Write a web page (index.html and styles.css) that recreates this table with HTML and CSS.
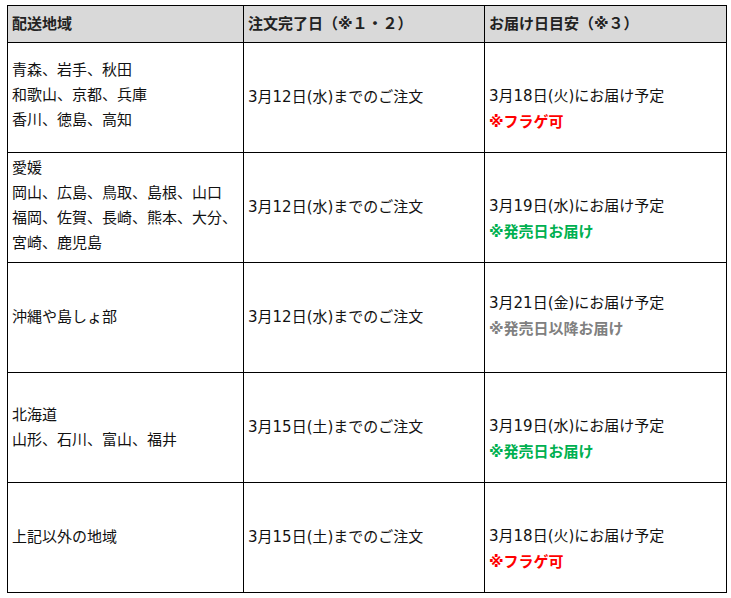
FILE: index.html
```html
<!DOCTYPE html>
<html lang="ja">
<head>
<meta charset="utf-8">
<title>配送スケジュール</title>
<link rel="stylesheet" href="styles.css">
</head>
<body>
<div class="wrap">
<table class="ship">
  <colgroup>
    <col class="c1"><col class="c2"><col class="c3">
  </colgroup>
  <thead>
    <tr>
      <th>配送地域</th>
      <th>注文完了日（※１・２）</th>
      <th>お届け日目安（※３）</th>
    </tr>
  </thead>
  <tbody>
    <tr>
      <td class="multi">青森、岩手、秋田<br>和歌山、京都、兵庫<br>香川、徳島、高知</td>
      <td>3月12日(水)までのご注文</td>
      <td class="deliv offset">3月18日(火)にお届け予定<br><span class="note red">※フラゲ可</span></td>
    </tr>
    <tr>
      <td class="multi">愛媛<br>岡山、広島、鳥取、島根、山口<br>福岡、佐賀、長崎、熊本、大分、<br>宮崎、鹿児島</td>
      <td>3月12日(水)までのご注文</td>
      <td class="deliv offset">3月19日(水)にお届け予定<br><span class="note green">※発売日お届け</span></td>
    </tr>
    <tr>
      <td>沖縄や島しょ部</td>
      <td>3月12日(水)までのご注文</td>
      <td class="deliv">3月21日(金)にお届け予定<br><span class="note gray">※発売日以降お届け</span></td>
    </tr>
    <tr>
      <td>北海道<br>山形、石川、富山、福井</td>
      <td>3月15日(土)までのご注文</td>
      <td class="deliv offset">3月19日(水)にお届け予定<br><span class="note green">※発売日お届け</span></td>
    </tr>
    <tr>
      <td>上記以外の地域</td>
      <td>3月15日(土)までのご注文</td>
      <td class="deliv offset">3月18日(火)にお届け予定<br><span class="note red">※フラゲ可</span></td>
    </tr>
  </tbody>
</table>
</div>
</body>
</html>
```

FILE: styles.css
```css
html, body {
  margin: 0;
  padding: 0;
  background: #fff;
}
.wrap {
  padding: 5px 0 0 7px;
}
.ship {
  border-collapse: collapse;
  table-layout: fixed;
  width: 719px;
  font-family: "DejaVu Sans", "Noto Sans CJK JP", sans-serif;
  font-size: 15px;
  color: #111;
}
.c1 { width: 236px; }
.c2 { width: 241px; }
.c3 { width: 242px; }
.ship th,
.ship td {
  border: 1px solid #000;
  padding: 0 4px;
  text-align: left;
  vertical-align: middle;
  line-height: 25px;
}
.ship th {
  background: #d9d9d9;
  font-weight: bold;
  color: #222;
  height: 36px;
}
.ship td {
  height: 109px;
}
.ship td.multi {
  padding-bottom: 4px;
  height: 105px;
}
.ship td.deliv {
  line-height: 26px;
  padding-bottom: 4px;
  height: 105px;
}
.ship td.offset {
  padding-top: 22px;
  padding-bottom: 0;
  height: 87px;
}
.note { font-weight: bold; }
.red { color: #ff0000; }
.green { color: #00b050; }
.gray { color: #808080; }
```
